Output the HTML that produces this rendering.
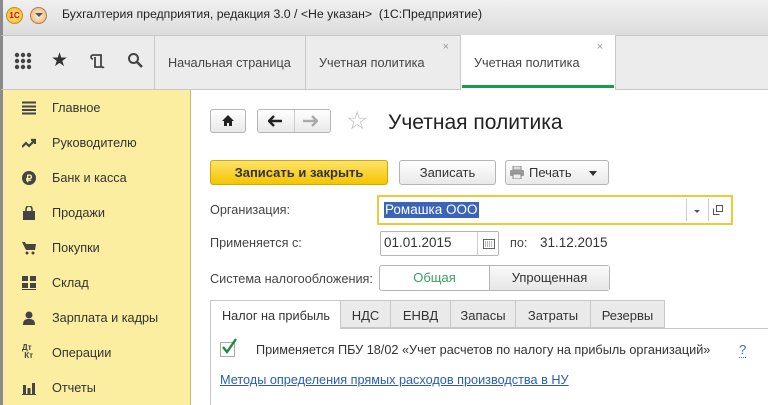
<!DOCTYPE html>
<html><head><meta charset="utf-8"><style>
*{margin:0;padding:0;box-sizing:border-box}
body{width:768px;height:405px;overflow:hidden;background:#fff;font-family:"Liberation Sans",Arial,sans-serif;font-size:13px;color:#333;position:relative}
.abs{position:absolute}
.title{left:0;top:0;width:768px;height:35px;background:linear-gradient(#f0f0f0,#dcdcdc);border-left:3px solid #8a8a8a}
.tb{left:0;top:35px;width:768px;height:55px;background:#ececec;border-top:1px solid #c8c8c8;border-bottom:1px solid #c8c8c8;border-left:3px solid #8a8a8a}
.tab{top:35px;height:55px;border-left:1px solid #c8c8c8;font-size:12.7px;color:#444;padding:21px 0 0 13px}
.side{left:0;top:90px;width:191px;height:315px;background:#fbeea0;border-left:3px solid #8a8a8a;border-right:1px solid #c9b86c}
.side div{position:absolute;left:49px;font-size:12.7px;color:#333}
.ic{position:absolute;left:19px;width:14px;height:14px}
.btn{border:1px solid #b5b5b5;border-radius:3px;background:linear-gradient(#fff,#e9e9e9);text-align:center;font-size:13px;color:#333}
.lbl{font-size:12.7px;color:#444}
</style></head><body>
<div class="abs title"></div>
<div class="abs" style="left:6px;top:7px;width:17px;height:17px;border-radius:50%;background:radial-gradient(#ffe98a,#f0b020);border:1px solid #c89020;font-size:8px;color:#d00;font-weight:bold;text-align:center;line-height:15px">1С</div>
<div class="abs" style="left:30px;top:7px;width:17px;height:17px;border-radius:50%;background:radial-gradient(#fff0d0,#e8b070);border:1px solid #b08050"></div>
<div class="abs" style="left:35px;top:13px;width:0;height:0;border-left:4px solid transparent;border-right:4px solid transparent;border-top:4px solid #555"></div>
<div class="abs" style="left:62px;top:7px;font-size:12.3px;color:#222">Бухгалтерия предприятия, редакция 3.0 / &lt;Не указан&gt;&nbsp; (1С:Предприятие)</div>
<div class="abs tb"></div>
<svg class="abs" style="left:14px;top:52px" width="18" height="18"><g fill="#444"><circle cx="3" cy="3" r="2.2"/><circle cx="9" cy="3" r="2.2"/><circle cx="15" cy="3" r="2.2"/><circle cx="3" cy="9" r="2.2"/><circle cx="9" cy="9" r="2.2"/><circle cx="15" cy="9" r="2.2"/><circle cx="3" cy="15" r="2.2"/><circle cx="9" cy="15" r="2.2"/><circle cx="15" cy="15" r="2.2"/></g></svg>
<div class="abs" style="left:51px;top:49px;font-size:19px;color:#333">★</div>
<svg class="abs" style="left:90px;top:53px" width="16" height="17"><path d="M3 2h8v11a2 2 0 0 0 3 1M3 2a2 2 0 0 0 0 4M5 4v10h7" fill="none" stroke="#444" stroke-width="1.8"/></svg>
<svg class="abs" style="left:127px;top:52px" width="17" height="17"><circle cx="6.5" cy="6.5" r="4.5" fill="none" stroke="#444" stroke-width="2"/><path d="M10 10l5 5" stroke="#444" stroke-width="2.6"/></svg>
<div class="abs tab" style="left:154px;width:152px">Начальная страница</div>
<div class="abs tab" style="left:305px;width:156px">Учетная политика<span style="position:absolute;right:12px;top:6px;font-size:11px;color:#999">×</span></div>
<div class="abs tab" style="left:460px;width:156px;background:#fff;height:55px;border-right:1px solid #c8c8c8">Учетная политика<span style="position:absolute;right:12px;top:6px;font-size:11px;color:#999">×</span><div style="position:absolute;left:1px;right:1px;bottom:2px;height:3px;background:#1a9a4a"></div></div>
<div class="abs side">
<svg class="ic" style="top:11px" viewBox="0 0 14 14"><path d="M0 1.5h14M0 5.5h14M0 9h14M0 12.5h14" stroke="#444" stroke-width="2"/></svg><div style="top:11px">Главное</div>
<svg class="ic" style="top:46px" viewBox="0 0 14 14"><path d="M0 11l4-4 3 3 5-5M9 4h4v4" stroke="#444" stroke-width="2.2" fill="none"/></svg><div style="top:46px">Руководителю</div>
<svg class="ic" style="top:81px" viewBox="0 0 14 14"><circle cx="7" cy="7" r="7" fill="#444"/><text x="7" y="11" font-size="10" fill="#fbeea0" text-anchor="middle" font-family="Liberation Sans" font-weight="bold">₽</text></svg><div style="top:81px">Банк и касса</div>
<svg class="ic" style="top:116px" viewBox="0 0 14 14"><path d="M1 5h12v9H1z" fill="#444"/><path d="M4 6V3a3 3 0 0 1 6 0v3" stroke="#444" stroke-width="1.6" fill="none"/></svg><div style="top:116px">Продажи</div>
<svg class="ic" style="top:151px" viewBox="0 0 14 14"><path d="M0 1h3l1 2h10l-1 6H4z" fill="#444"/><circle cx="5" cy="12" r="1.5" fill="#444"/><circle cx="11" cy="12" r="1.5" fill="#444"/></svg><div style="top:151px">Покупки</div>
<svg class="ic" style="top:186px" viewBox="0 0 14 14"><path d="M0 0h6v5H0zM8 0h6v5H8zM0 7h6v5H0zM8 7h6v5H8zM0 13h14v1H0z" fill="#444"/></svg><div style="top:186px">Склад</div>
<svg class="ic" style="top:221px" viewBox="0 0 14 14"><circle cx="7" cy="4" r="3.5" fill="#444"/><path d="M1 14c0-5 2-6 6-6s6 1 6 6z" fill="#444"/></svg><div style="top:221px">Зарплата и кадры</div>
<div style="left:19px;top:254px;font-size:8px;line-height:8px;font-weight:bold;color:#444">Дт<br>&nbsp;Кт</div><div style="top:256px">Операции</div>
<svg class="ic" style="top:291px" viewBox="0 0 14 14"><path d="M1 4h3v9H1zM5.5 7h3v6h-3zM10 2h3v11h-3zM0 13h14v1H0z" fill="#444"/></svg><div style="top:291px">Отчеты</div>
</div>
<div class="abs btn" style="left:210px;top:109px;width:36px;height:24px"></div>
<svg class="abs" style="left:221px;top:114px" width="14" height="13"><path d="M7 1L1 7h2v5h3V9h2v3h3V7h2z" fill="#222"/></svg>
<div class="abs btn" style="left:257px;top:109px;width:74px;height:24px"></div>
<div class="abs" style="left:294px;top:110px;width:1px;height:22px;background:#ccc"></div>
<svg class="abs" style="left:268px;top:115px" width="16" height="12"><path d="M1 6h13M6 1L1 6l5 5" stroke="#222" stroke-width="2.4" fill="none"/></svg>
<svg class="abs" style="left:302px;top:115px" width="16" height="12"><path d="M1 6h13M10 1l5 5-5 5" stroke="#aaa" stroke-width="2.4" fill="none"/></svg>
<div class="abs" style="left:346px;top:108px;font-size:25px;color:#bbb;line-height:26px">☆</div>
<div class="abs" style="left:388px;top:111px;font-size:21px;color:#222">Учетная политика</div>
<div class="abs" style="left:210px;top:160px;width:178px;height:25px;border:1px solid #d4a800;border-radius:3px;background:linear-gradient(#fde36a,#f5c400);text-align:center;font-weight:bold;line-height:23px;color:#333">Записать и закрыть</div>
<div class="abs btn" style="left:399px;top:160px;width:97px;height:25px;line-height:23px">Записать</div>
<div class="abs btn" style="left:505px;top:160px;width:104px;height:25px;line-height:23px;text-align:left;padding-left:23px">Печать</div>
<svg class="abs" style="left:510px;top:166px" width="15" height="13"><rect x="3" y="0" width="8" height="4" fill="#ddd" stroke="#888"/><rect x="0" y="4" width="14" height="6" rx="1" fill="#999"/><rect x="3" y="8" width="8" height="5" fill="#eee" stroke="#888"/></svg>
<div class="abs" style="left:589px;top:171px;border-left:4px solid transparent;border-right:4px solid transparent;border-top:5px solid #333"></div>
<div class="abs lbl" style="left:210px;top:203px">Организация:</div>
<div class="abs" style="left:377px;top:195px;width:356px;height:30px;border:2px solid #f0c93a;background:#fff"></div>
<div class="abs" style="left:384px;top:202px;background:#3a64b8;color:#fff;font-size:13.5px;padding:0 1px;line-height:16px">Ромашка ООО</div>
<div class="abs" style="left:686px;top:199px;width:1px;height:22px;background:#ccc"></div>
<div class="abs" style="left:708px;top:199px;width:1px;height:22px;background:#ccc"></div>
<div class="abs" style="left:694px;top:210px;border-left:3px solid transparent;border-right:3px solid transparent;border-top:3px solid #555"></div>
<svg class="abs" style="left:713px;top:205px" width="10" height="10"><rect x="3.5" y="0.5" width="6" height="6" fill="none" stroke="#555"/><path d="M0.5 3.5v6h6" fill="none" stroke="#555"/></svg>
<div class="abs lbl" style="left:210px;top:236px">Применяется с:</div>
<div class="abs" style="left:380px;top:231px;width:119px;height:25px;border:1px solid #b5b5b5;border-radius:2px;background:#fff;font-size:13.5px;padding:3px 0 0 3px;color:#333">01.01.2015</div>
<div class="abs" style="left:477px;top:232px;width:1px;height:23px;background:#ccc"></div>
<svg class="abs" style="left:483px;top:239px" width="12" height="10"><rect x="0.5" y="0.5" width="11" height="9" fill="none" stroke="#666"/><path d="M2 3h8M2 5h8M2 7h8" stroke="#777" stroke-dasharray="1 1"/></svg>
<div class="abs lbl" style="left:510px;top:236px">по:</div>
<div class="abs" style="left:540px;top:235px;font-size:13.5px;color:#333">31.12.2015</div>
<div class="abs lbl" style="left:210px;top:272px">Система налогообложения:</div>
<div class="abs" style="left:379px;top:265px;width:231px;height:26px;border:1px solid #b5b5b5;border-radius:3px;background:#fff"></div>
<div class="abs" style="left:379px;top:265px;width:111px;height:26px;text-align:center;line-height:26px;color:#3aa060">Общая</div>
<div class="abs" style="left:489px;top:266px;width:120px;height:24px;border-left:1px solid #b5b5b5;background:linear-gradient(#fafafa,#e6e6e6);text-align:center;line-height:24px;color:#333">Упрощенная</div>
<div class="abs" style="left:210px;top:328px;width:558px;height:1px;background:#c8c8c8"></div>
<div class="abs" style="left:210px;top:300px;width:558px;height:105px;border-left:1px solid #c8c8c8"></div>
<div class="abs" style="left:210px;top:300px;width:131px;height:29px;border:1px solid #c8c8c8;border-bottom:none;background:#fff;padding:8px 0 0 11px;color:#333;font-size:12.7px">Налог на прибыль</div>
<div class="abs" style="left:341px;top:300px;width:50px;height:28px;border:1px solid #c8c8c8;border-left:none;background:#eaeaea;text-align:center;padding-top:7px">НДС</div>
<div class="abs" style="left:390px;top:300px;width:61px;height:28px;border:1px solid #c8c8c8;background:#eaeaea;text-align:center;padding-top:7px">ЕНВД</div>
<div class="abs" style="left:450px;top:300px;width:66px;height:28px;border:1px solid #c8c8c8;background:#eaeaea;text-align:center;padding-top:7px">Запасы</div>
<div class="abs" style="left:515px;top:300px;width:76px;height:28px;border:1px solid #c8c8c8;background:#eaeaea;text-align:center;padding-top:7px">Затраты</div>
<div class="abs" style="left:590px;top:300px;width:75px;height:28px;border:1px solid #c8c8c8;background:#eaeaea;text-align:center;padding-top:7px">Резервы</div>
<div class="abs" style="left:220px;top:342px;width:15px;height:15px;border:1px solid #aaa;background:#fff"></div>
<svg class="abs" style="left:220px;top:338px" width="18" height="18"><path d="M3 9l4 5 9-13" stroke="#1f8a3a" stroke-width="2.4" fill="none"/></svg>
<div class="abs" style="left:256px;top:343px;color:#333;font-size:12.7px">Применяется ПБУ 18/02 «Учет расчетов по налогу на прибыль организаций»</div>
<div class="abs" style="left:739px;top:343px;color:#3a6fc0;border-bottom:1px dotted #3a6fc0;line-height:14px">?</div>
<div class="abs" style="left:220px;top:373px;color:#2a5db0;text-decoration:underline;font-size:12.7px">Методы определения прямых расходов производства в НУ</div>
</body></html>
